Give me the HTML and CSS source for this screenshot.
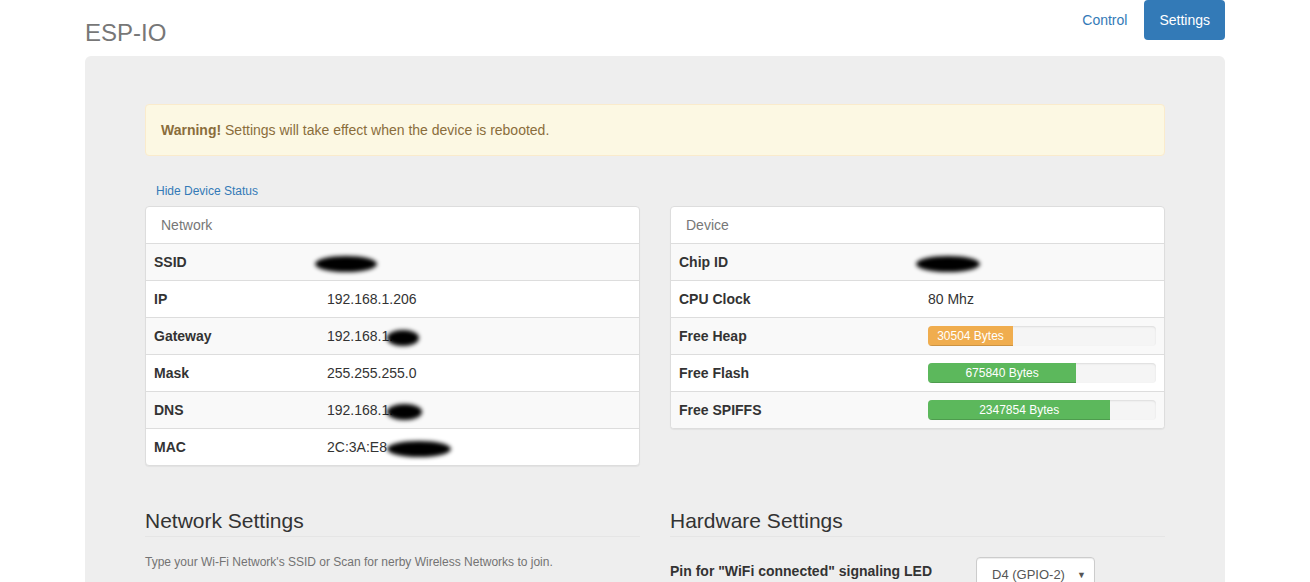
FILE: index.html
```html
<!DOCTYPE html>
<html>
<head>
<meta charset="utf-8">
<title>ESP-IO</title>
<link rel="stylesheet" href="styles.css">
</head>
<body>
<div class="container">
  <header class="header">
    <h3 class="brand">ESP-IO</h3>
    <ul class="nav-pills">
      <li><a class="pill" href="#">Control</a></li>
      <li><a class="pill active" href="#">Settings</a></li>
    </ul>
  </header>

  <div class="jumbotron">
    <div class="alert"><strong>Warning!</strong> Settings will take effect when the device is rebooted.</div>

    <a class="btn-link" href="#">Hide Device Status</a>

    <div class="row">
      <div class="col">
        <div class="panel">
          <div class="panel-heading">Network</div>
          <table class="table table-net">
            <tr><th>SSID</th><td><span class="blur blur-ssid"></span></td></tr>
            <tr><th>IP</th><td class="val">192.168.1.206</td></tr>
            <tr><th>Gateway</th><td class="val">192.168.1.<span class="blur blur-gw"></span></td></tr>
            <tr><th>Mask</th><td class="val">255.255.255.0</td></tr>
            <tr><th>DNS</th><td class="val">192.168.1.<span class="blur blur-dns"></span></td></tr>
            <tr><th>MAC</th><td class="val">2C:3A:E8<span class="blur blur-mac"></span></td></tr>
          </table>
        </div>
      </div>
      <div class="col">
        <div class="panel">
          <div class="panel-heading">Device</div>
          <table class="table table-dev">
            <tr><th>Chip ID</th><td><span class="blur blur-chip"></span></td></tr>
            <tr><th>CPU Clock</th><td class="val">80 Mhz</td></tr>
            <tr><th>Free Heap</th><td><div class="progress"><div class="bar bar-warning" style="width:37.3%">30504 Bytes</div></div></td></tr>
            <tr><th>Free Flash</th><td><div class="progress"><div class="bar bar-success" style="width:65%">675840 Bytes</div></div></td></tr>
            <tr><th>Free SPIFFS</th><td><div class="progress"><div class="bar bar-success" style="width:80%">2347854 Bytes</div></div></td></tr>
          </table>
        </div>
      </div>
    </div>

    <div class="row settings">
      <div class="col">
        <div class="legend">Network Settings</div>
        <p class="help">Type your Wi-Fi Network's SSID or Scan for nerby Wireless Networks to join.</p>
      </div>
      <div class="col">
        <div class="legend">Hardware Settings</div>
        <div class="form-group">
          <label class="control-label">Pin for "WiFi connected" signaling LED</label>
          <div class="select">D4 (GPIO-2)<span class="caret">&#9660;</span></div>
        </div>
      </div>
    </div>
  </div>
</div>
</body>
</html>
```

FILE: styles.css
```css
* { box-sizing: border-box; }
html, body { margin: 0; padding: 0; background: #fff; }
body {
  font-family: "Liberation Sans", Arial, Helvetica, sans-serif;
  font-size: 14px;
  line-height: 1.42857;
  color: #333;
}
.container {
  width: 1170px;
  margin: 0 auto;
  padding: 0 15px;
}
.header {
  display: flex;
  justify-content: space-between;
  align-items: flex-start;
}
.brand {
  margin: 20px 0 10px;
  font-size: 24px;
  font-weight: 400;
  line-height: 1.1;
  color: #777;
}
.nav-pills {
  list-style: none;
  margin: 0;
  padding: 0;
  display: flex;
  gap: 2px;
}
.pill {
  display: block;
  padding: 10px 15px;
  line-height: 20px;
  color: #337ab7;
  text-decoration: none;
  border-radius: 4px;
}
.pill.active {
  background: #337ab7;
  color: #fff;
}
.jumbotron {
  background: #eee;
  border-radius: 6px;
  padding: 48px 60px 60px;
  min-height: 600px;
}
.alert {
  background: #fcf8e3;
  border: 1px solid #faebcc;
  color: #8a6d3b;
  border-radius: 4px;
  padding: 15px;
  line-height: 20px;
  margin-bottom: 20px;
}
.alert strong { font-weight: 700; }
.btn-link {
  display: block;
  width: fit-content;
  padding: 5px 10px;
  border: 1px solid transparent;
  font-size: 12px;
  line-height: 1.5;
  color: #337ab7;
  text-decoration: none;
}
.row {
  display: flex;
  gap: 30px;
}
.col {
  flex: 1 1 0;
  min-width: 0;
}
.panel {
  background: #fff;
  border: 1px solid #ddd;
  border-radius: 4px;
  box-shadow: 0 1px 1px rgba(0,0,0,.05);
  margin-bottom: 20px;
  overflow: hidden;
}
.panel-heading {
  padding: 8px 15px;
  line-height: 20px;
  color: #777;
  border-bottom: 1px solid #ddd;
}
.table {
  width: 100%;
  border-collapse: collapse;
  border-spacing: 0;
}
.table th, .table td {
  padding: 8px;
  line-height: 20px;
  text-align: left;
  vertical-align: middle;
  border-top: 1px solid #ddd;
}
.table tr:first-child th, .table tr:first-child td { border-top: 0; }
.table tr:nth-child(odd) { background: #f9f9f9; }
.table th { font-weight: 700; }
.table-net th { width: 173px; }
.table-dev th { width: 249px; }
.val { color: #333; }
.blur {
  display: inline-block;
  vertical-align: middle;
  height: 16px;
  background: #000;
  border-radius: 50%;
  filter: blur(2px);
}
.blur-ssid { width: 62px; margin-left: -12px; }
.blur-gw { width: 32px; margin-left: -6px; }
.blur-dns { width: 35px; margin-left: -6px; }
.blur-mac { width: 64px; margin-left: 0; }
.blur-chip { width: 64px; margin-left: -12px; }
.progress {
  height: 20px;
  background: #f5f5f5;
  border-radius: 4px;
  box-shadow: inset 0 1px 2px rgba(0,0,0,.1);
  overflow: hidden;
}
.bar {
  height: 100%;
  font-size: 12px;
  line-height: 20px;
  color: #fff;
  text-align: center;
  box-shadow: inset 0 -1px 0 rgba(0,0,0,.15);
}
.bar-warning { background: #f0ad4e; }
.bar-success { background: #5cb85c; }
.settings { margin-top: 20px; }
.legend {
  font-size: 21px;
  line-height: 30px;
  color: #333;
  border-bottom: 1px solid #e5e5e5;
  margin-bottom: 17px;
}
.help {
  margin: 0;
  font-size: 12px;
  line-height: 17px;
  color: #737373;
}
.form-group {
  display: flex;
  align-items: flex-start;
  margin-top: 20px;
}
.settings .col:last-child .legend { margin-bottom: 0; }
.control-label {
  width: 306px;
  font-weight: 700;
  padding-top: 4px;
  line-height: 20px;
}
.select {
  width: 119px;
  height: 34px;
  background: #fff;
  border: 1px solid #ccc;
  border-radius: 4px;
  box-shadow: inset 0 1px 1px rgba(0,0,0,.075);
  padding: 7px 12px 6px 15px;
  font-size: 13px;
  line-height: 20px;
  color: #555;
  position: relative;
}
.caret {
  position: absolute;
  right: 8px;
  top: 7px;
  font-size: 9px;
  color: #555;
}
```
